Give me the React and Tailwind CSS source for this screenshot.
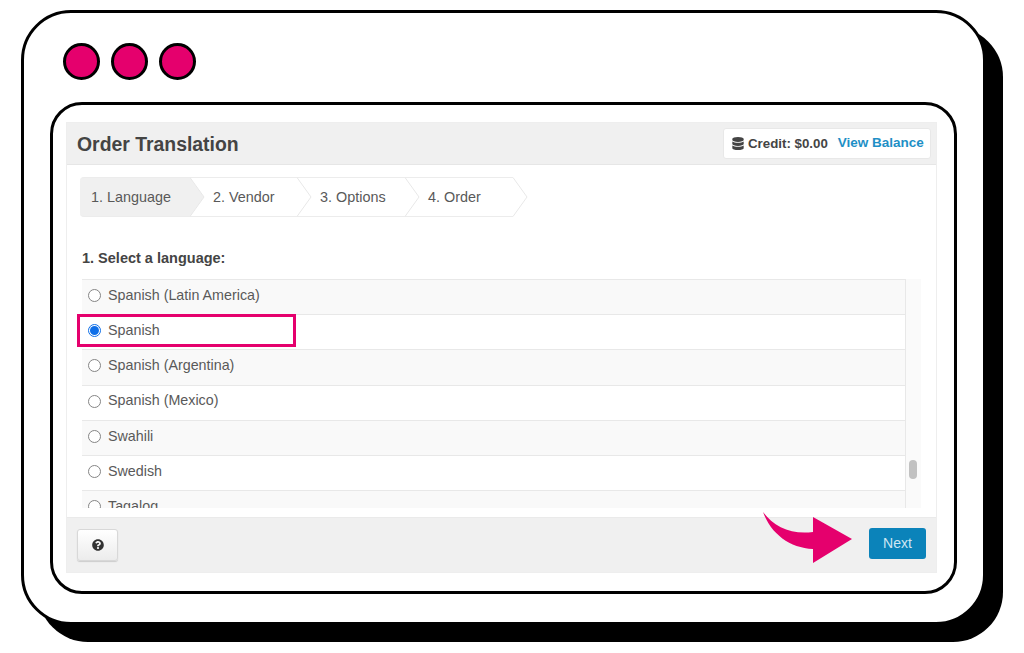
import { FaDatabase, FaQuestionCircle } from 'react-icons/fa';

const rows = ['Spanish (Latin America)', 'Spanish', 'Spanish (Argentina)', 'Spanish (Mexico)', 'Swahili', 'Swedish', 'Tagalog'];

const steps = [
    { label: '1. Language', width: 'w-[110px]', pad: 'pl-[11px]', active: true },
    { label: '2. Vendor', width: 'w-[107px]', pad: 'pl-[23px]' },
    { label: '3. Options', width: 'w-[108px]', pad: 'pl-[23px]' },
    { label: '4. Order', width: 'w-[108px]', pad: 'pl-[23px]' },
];

function Step({ step }) {
    return (
        <div className={`relative flex h-[40px] items-center pt-[1px] ${step.width} ${step.pad} ${step.active ? 'rounded-l-[4px] bg-[#f0f0f0]' : ''} border-y border-[#ececec] text-[14.4px] text-[#595959]`}>
            {step.label}
            <svg className="absolute left-full top-[-1px] z-10" width="15" height="40" viewBox="0 0 15 40">
                <path d="M0 0.5 L14 20 L0 39.5" fill={step.active ? '#f0f0f0' : '#fff'} stroke="#e8e8e8" />
            </svg>
        </div>
    );
}

function Row({ label, index }) {
    const checked = label === 'Spanish';
    return (
        <div className={`flex h-[35.2px] shrink-0 items-center gap-[7px] border-t border-[#e8e8e8] pb-[3px] pl-[6px] text-[14.3px] text-[#595959] ${index % 2 === 0 ? 'bg-[#f9f9f9]' : 'bg-white'}`}>
            <span className={`flex h-[13px] w-[13px] items-center justify-center rounded-full border bg-white ${checked ? 'border-[#0f6fe8]' : 'border-[#858585]'}`}>
                {checked && <span className="h-[9px] w-[9px] rounded-full bg-[#0f6fe8]" />}
            </span>
            {label}
        </div>
    );
}

export default function App() {
    return (
        <div className="h-[653px] w-[1024px] overflow-hidden bg-white pl-[21px] pt-[10px] font-['Liberation_Sans',sans-serif]">
            <div className="h-[615px] w-[965px] rounded-[50px] border-[3px] border-black bg-white pl-[26px] pt-[30px] shadow-[17px_17px_0_0_#000]">
                {/* Window dots */}
                <div className="ml-[13px] flex gap-[11px]">
                    <div className="h-[37px] w-[37px] rounded-full border-[3px] border-black bg-[#e5006d]" />
                    <div className="h-[37px] w-[37px] rounded-full border-[3px] border-black bg-[#e5006d]" />
                    <div className="h-[37px] w-[37px] rounded-full border-[3px] border-black bg-[#e5006d]" />
                </div>

                <div className="mt-[22px] h-[492px] w-[907px] rounded-[32px] border-[3px] border-black pl-[13px] pt-[17px]">
                    <div className="relative flex h-[451px] w-[871px] flex-col border border-[#eeeeee]">
                        {/* Header */}
                        <div className="flex h-[42px] shrink-0 items-center justify-between border-b border-[#e6e6e6] bg-[#f0f0f0] pl-[10px] pr-[5px]">
                            <h1 className="pt-[2px] text-[19.4px] font-bold text-[#444]">Order Translation</h1>
                            <div className="flex h-[31px] w-[208px] items-center rounded-[3px] border border-[#e8e8e8] bg-white pl-[8px] text-[13.3px] font-bold">
                                <FaDatabase className="h-[13px] w-[12px] text-[#444]" />
                                <span className="ml-[4px] text-[#444]">Credit: $0.00</span>
                                <span className="ml-[10px] text-[13.5px] text-[#1e8fc6]">View Balance</span>
                            </div>
                        </div>

                        {/* Body */}
                        <div className="flex-1 pl-[13px] pt-[12px]">
                            <div className="flex">
                                {steps.map(step => <Step key={step.label} step={step} />)}
                            </div>
                            <h2 className="ml-[2px] mt-[33px] text-[14.5px] font-bold leading-[16px] text-[#444]">1. Select a language:</h2>
                            <div className="relative ml-[2px] mt-[13px] flex h-[229px] w-[839px] overflow-hidden">
                                <div className="flex w-[824px] flex-col border-r border-[#e8e8e8]">
                                    {rows.map((row, i) => <Row key={row} label={row} index={i} />)}
                                </div>
                                <div className="relative w-[15px] bg-[#fafafa]">
                                    <div className="absolute left-[3px] top-[181px] h-[19px] w-[8px] rounded-[4px] bg-[#c1c1c1]" />
                                </div>
                            </div>
                        </div>

                        {/* Footer */}
                        <div className="flex h-[55px] shrink-0 items-center justify-between border-t border-[#eaeaea] bg-[#f0f0f0] pl-[10px] pr-[10px]">
                            <button className="flex h-[32px] w-[41px] items-center justify-center rounded-[3px] border border-[#d8d8d8] bg-gradient-to-b from-white to-[#ececec] shadow-[0_1px_1px_#ccc]">
                                <FaQuestionCircle className="h-[12px] w-[12px] text-[#333]" />
                            </button>
                            <button className="mb-[3px] h-[31px] w-[57px] rounded-[3px] bg-[#0b83ba] text-[14px] text-[#cfe6f2]">Next</button>
                        </div>

                        {/* Highlight around the selected row */}
                        <div className="absolute left-[10px] top-[191px] h-[33px] w-[219px] border-[3px] border-[#e5006d]" />

                        {/* Arrow pointing at Next */}
                        <svg className="absolute left-[695px] top-[389px]" width="90" height="52" viewBox="0 0 90 52">
                            <path d="M1 0 C12 15 30 23 51 20 L51 5 L90 27 L51 51 L51 37 C28 36 9 22 1 0 Z" fill="#e5006d" />
                        </svg>
                    </div>
                </div>
            </div>
        </div>
    );
}
